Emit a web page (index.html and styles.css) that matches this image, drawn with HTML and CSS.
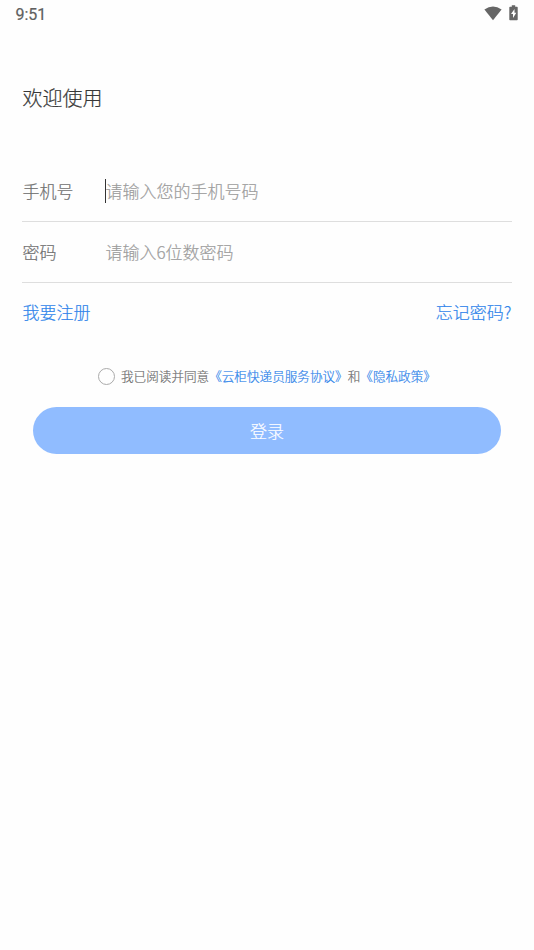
FILE: index.html
```html
<!DOCTYPE html>
<html lang="zh-CN">
<head>
<meta charset="utf-8">
<title>登录</title>
<link rel="stylesheet" href="styles.css">
</head>
<body>
<header class="status">
  <span class="clock">9:51</span>
  <span class="status-icons">
    <svg class="wifi" width="18" height="15" viewBox="0 0 18 15"><path d="M0.4 3.4Q9 -2.3 17.6 3.4L9 14.2Z"/></svg>
    <svg class="battery" width="9" height="16" viewBox="0 0 9 16"><path d="M2.8 0.3h3.4v1.5H8q.7 0 .7.7v12q0 .8-.7.8H1q-.7 0-.7-.8v-12q0-.7.7-.7h1.8z"/><path class="bolt" d="M5.5 4L2 9h2v4l3.3-5.2H5.5z"/></svg>
  </span>
</header>
<main class="page">
  <h1 class="title">欢迎使用</h1>
  <form class="form">
    <div class="row"><span class="label">手机号</span><span class="field focused">请输入您的手机号码</span></div>
    <div class="row"><span class="label">密码</span><span class="field">请输入6位数密码</span></div>
    <div class="links"><a>我要注册</a><a>忘记密码?</a></div>
    <div class="agree"><span class="radio"></span><span class="agree-text">我已阅读并同意<a>《云柜快递员服务协议》</a>和<a>《隐私政策》</a></span></div>
    <button class="login" type="button">登录</button>
  </form>
</main>
</body>
</html>
```
FILE: styles.css
```css
* { box-sizing: border-box; }
body {
  margin: 0;
  min-height: 950px;
  background: #fefefe;
  color: #6e6e6e;
  font: 17px/24px "Noto Sans CJK SC", sans-serif;
  font-weight: 300;
  -webkit-text-stroke: 0.2px;
}
.status {
  display: flex;
  justify-content: space-between;
  height: 28px;
  padding: 5px 16px 0 15px;
}
.clock {
  font: 400 16px/19px Roboto, sans-serif;
  color: #606060;
  padding-left: 0.5px;
}
.status-icons { display: flex; gap: 7px; }
.status-icons svg { fill: #666; }
.wifi { margin-top: 1px; }
.status-icons .bolt { fill: #fff; }
.page { padding: 55px 22px 0; }
.title {
  margin: 0 0 48px;
  padding-left: 0.5px;
  font-size: 20px;
  line-height: 29px;
  font-weight: 300;
  color: #383838;
}
.row {
  display: flex;
  align-items: center;
  height: 61px;
  border-bottom: 1px solid #dedede;
}
.row:first-child { height: 62px; }
.label { width: 83px; padding-left: 0.5px; }
.field {
  position: relative;
  padding-left: 0.5px;
  color: #9c9c9c;
}
.focused::before {
  content: "";
  position: absolute;
  left: 0;
  top: 0;
  width: 1px;
  height: 24px;
  background: #333;
}
.links {
  display: flex;
  justify-content: space-between;
  padding: 17px 0.5px 0;
}
a { color: #2f84ea; }
.agree {
  display: flex;
  align-items: center;
  margin: 43px 0 0 76px;
  height: 18px;
  gap: 6px;
  white-space: nowrap;
}
.radio {
  width: 17px;
  height: 17px;
  border: 1px solid #aaa;
  border-radius: 50%;
}
.agree-text { font-size: 12.6px; line-height: 18px; }
.login {
  display: block;
  width: 468px;
  height: 47px;
  margin: 22px 0 0 11px;
  padding: 0;
  border: 0;
  border-radius: 24px;
  background: #90bcff;
  color: #fff;
  font: inherit;
}
```
